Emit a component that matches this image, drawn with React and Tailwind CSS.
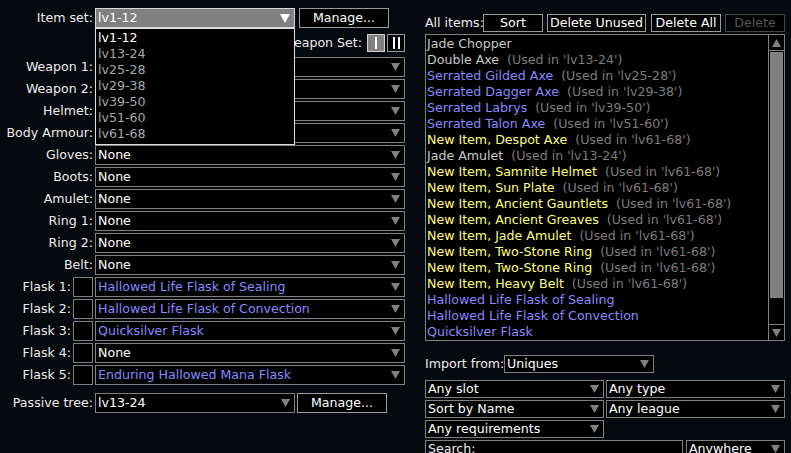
import React from 'react'

const GRAY = 'border-[#808080]'

function Arrow({ color = '#808080', w = 9, h = 8 }) {
  return (
    <svg width={w} height={h} viewBox={`0 0 ${w} ${h}`} className="shrink-0">
      <polygon points={`0,0 ${w},0 ${w / 2},${h}`} fill={color} />
    </svg>
  )
}

function Select({ value, color = 'text-white', className = '', h = 'h-[20px]' }) {
  return (
    <div className={`${h} border ${GRAY} bg-black flex items-center justify-between pl-[2px] pr-[4px] ${className}`}>
      <span className={`truncate whitespace-pre ${color}`}>{value}</span>
      <Arrow />
    </div>
  )
}

function Button({ children, className = '', disabled }) {
  return (
    <div
      className={`h-[18px] border flex items-center justify-center bg-black whitespace-nowrap ${
        disabled ? 'border-[#444] text-[#555]' : 'border-[#999] text-white'
      } ${className}`}
    >
      {children}
    </div>
  )
}

// the first four rows sit under the open item-set list
const SLOTS = [
  ['Weapon 1:', ''],
  ['Weapon 2:', ''],
  ['Helmet:', ''],
  ['Body Armour:', ''],
  ['Gloves:', 'None'],
  ['Boots:', 'None'],
  ['Amulet:', 'None'],
  ['Ring 1:', 'None'],
  ['Ring 2:', 'None'],
  ['Belt:', 'None'],
]

const FLASKS = [
  ['Flask 1:', 'Hallowed Life Flask of Sealing', true],
  ['Flask 2:', 'Hallowed Life Flask of Convection', true],
  ['Flask 3:', 'Quicksilver Flask', true],
  ['Flask 4:', 'None', false],
  ['Flask 5:', 'Enduring Hallowed Mana Flask', true],
]

const SETS = ['lv1-12', 'lv13-24', 'lv25-28', 'lv29-38', 'lv39-50', 'lv51-60', 'lv61-68']

const N = 'text-[#c8c8c8]'
const M = 'text-[#8888ff]'
const R = 'text-[#ffff77]'

const ITEMS = [
  ['Jade Chopper', N, null],
  ['Double Axe', N, 'lv13-24'],
  ['Serrated Gilded Axe', M, 'lv25-28'],
  ['Serrated Dagger Axe', M, 'lv29-38'],
  ['Serrated Labrys', M, 'lv39-50'],
  ['Serrated Talon Axe', M, 'lv51-60'],
  ['New Item, Despot Axe', R, 'lv61-68'],
  ['Jade Amulet', N, 'lv13-24'],
  ['New Item, Samnite Helmet', R, 'lv61-68'],
  ['New Item, Sun Plate', R, 'lv61-68'],
  ['New Item, Ancient Gauntlets', R, 'lv61-68'],
  ['New Item, Ancient Greaves', R, 'lv61-68'],
  ['New Item, Jade Amulet', R, 'lv61-68'],
  ['New Item, Two-Stone Ring', R, 'lv61-68'],
  ['New Item, Two-Stone Ring', R, 'lv61-68'],
  ['New Item, Heavy Belt', R, 'lv61-68'],
  ['Hallowed Life Flask of Sealing', M, null],
  ['Hallowed Life Flask of Convection', M, null],
  ['Quicksilver Flask', M, null],
]

export default function App() {
  return (
    <div className="w-[791px] h-[453px] bg-[#06090e] overflow-hidden relative font-['DejaVu_Sans',sans-serif] text-[12.6px] leading-[16px] text-[#ececec] flex">
      {/* Left: equipped items */}
      <div className="w-[425px] shrink-0 pt-[8px] relative">
        <div className="flex items-center h-[20px]">
          <span className="w-[95px] text-right pr-[2px] whitespace-nowrap">Item set:</span>
          <div className="relative w-[200px]">
            <div className="h-[20px] border border-[#d8d8d8] bg-[#808080] flex items-center justify-between pl-[2px] pr-[4px]">
              <span className="text-white">lv1-12</span>
              <Arrow color="#ffffff" w={10} h={9} />
            </div>
            {/* open list */}
            <div className="absolute left-0 top-[20px] w-[200px] border border-[#e0e0e0] bg-black z-10 pl-[2px] pt-[1px] pb-[2px]">
              {SETS.map((s, i) => (
                <div key={s} className={`h-[16px] ${i === 0 ? 'text-white' : 'text-[#a8a8a8]'}`}>{s}</div>
              ))}
            </div>
          </div>
          <Button className="w-[90px] ml-[4px] h-[20px]">Manage...</Button>
        </div>

        <div className="flex items-center justify-end h-[18px] mt-[6px] w-[405px]">
          <span className="mr-[5px] whitespace-nowrap">Weapon Set:</span>
          <div className="w-[18px] h-[18px] border border-[#d0d0d0] bg-[#808080] flex items-center justify-center">
            <div className="w-[2px] h-[12px] bg-white" />
          </div>
          <div className="w-[18px] h-[18px] ml-[2px] border border-[#999] bg-black flex items-center justify-center gap-[3px]">
            <div className="w-[2px] h-[12px] bg-white" />
            <div className="w-[2px] h-[12px] bg-white" />
          </div>
        </div>

        <div className="flex flex-col gap-[2px] mt-[5px]">
          {SLOTS.map(([label, v]) => (
            <div key={label} className="flex items-center">
              <span className="w-[95px] text-right pr-[2px] whitespace-nowrap">{label}</span>
              <Select value={v} className="w-[310px]" />
            </div>
          ))}
          {FLASKS.map(([label, v, magic]) => (
            <div key={label} className="flex items-center">
              <span className="w-[73px] text-right pr-[2px] whitespace-nowrap">{label}</span>
              <div className="w-[20px] h-[20px] border border-[#808080] bg-black" />
              <Select value={v} color={magic ? M : 'text-white'} className="w-[310px] ml-[2px]" />
            </div>
          ))}
        </div>

        <div className="flex items-center mt-[8px]">
          <span className="w-[95px] text-right pr-[2px] whitespace-nowrap">Passive tree:</span>
          <Select value="lv13-24" className="w-[200px]" />
          <Button className="w-[90px] ml-[2px] h-[20px]">Manage...</Button>
        </div>
      </div>

      {/* Right: item database */}
      <div className="w-[360px] shrink-0 pt-[14px]">
        <div className="flex items-center h-[18px]">
          <span className="w-[58px] whitespace-nowrap">All items:</span>
          <Button className="w-[60px]">Sort</Button>
          <Button className="w-[99px] ml-[4px]">Delete Unused</Button>
          <Button className="w-[70px] ml-[5px]">Delete All</Button>
          <Button className="w-[60px] ml-[4px]" disabled>Delete</Button>
        </div>

        <div className="mt-[2px] h-[307px] border border-[#808080] bg-black flex">
          <div className="flex-1 pl-[1px] pt-[1px] overflow-hidden">
            {ITEMS.map(([name, c, used], i) => (
              <div key={i} className="h-[16px] whitespace-pre">
                <span className={c}>{name}</span>
                {used && <span className="text-[#7c7c7c]">{`  (Used in '${used}')`}</span>}
              </div>
            ))}
          </div>
          <div className="w-[16px] border-l border-[#808080] flex flex-col">
            <div className="h-[16px] border-b border-[#808080] flex items-center justify-center">
              <svg width="9" height="8" viewBox="0 0 9 8"><polygon points="0,8 9,8 4.5,0" fill="#808080" /></svg>
            </div>
            <div className="flex-1 p-[1px] flex flex-col">
              <div className="h-[246px] bg-[#808080]" />
            </div>
            <div className="h-[16px] border-t border-[#808080] flex items-center justify-center">
              <Arrow />
            </div>
          </div>
        </div>

        <div className="flex items-center mt-[14px]">
          <span className="w-[79px] whitespace-nowrap">Import from:</span>
          <Select value="Uniques" h="h-[18px]" className="w-[150px]" />
        </div>

        <div className="mt-[7px] flex flex-col gap-[2px]">
          <div className="flex gap-[2px]">
            <Select value="Any slot" h="h-[18px]" className="w-[179px]" />
            <Select value="Any type" h="h-[18px]" className="w-[179px]" />
          </div>
          <div className="flex gap-[2px]">
            <Select value="Sort by Name" h="h-[18px]" className="w-[179px]" />
            <Select value="Any league" h="h-[18px]" className="w-[179px]" />
          </div>
          <div className="flex gap-[2px]">
            <Select value="Any requirements" h="h-[18px]" className="w-[179px]" />
          </div>
          <div className="flex gap-[3px]">
            <div className="h-[18px] w-[258px] border border-[#808080] bg-black pl-[2px] flex items-center">Search:</div>
            <Select value="Anywhere" h="h-[18px]" className="w-[99px]" />
          </div>
        </div>
      </div>
    </div>
  )
}
